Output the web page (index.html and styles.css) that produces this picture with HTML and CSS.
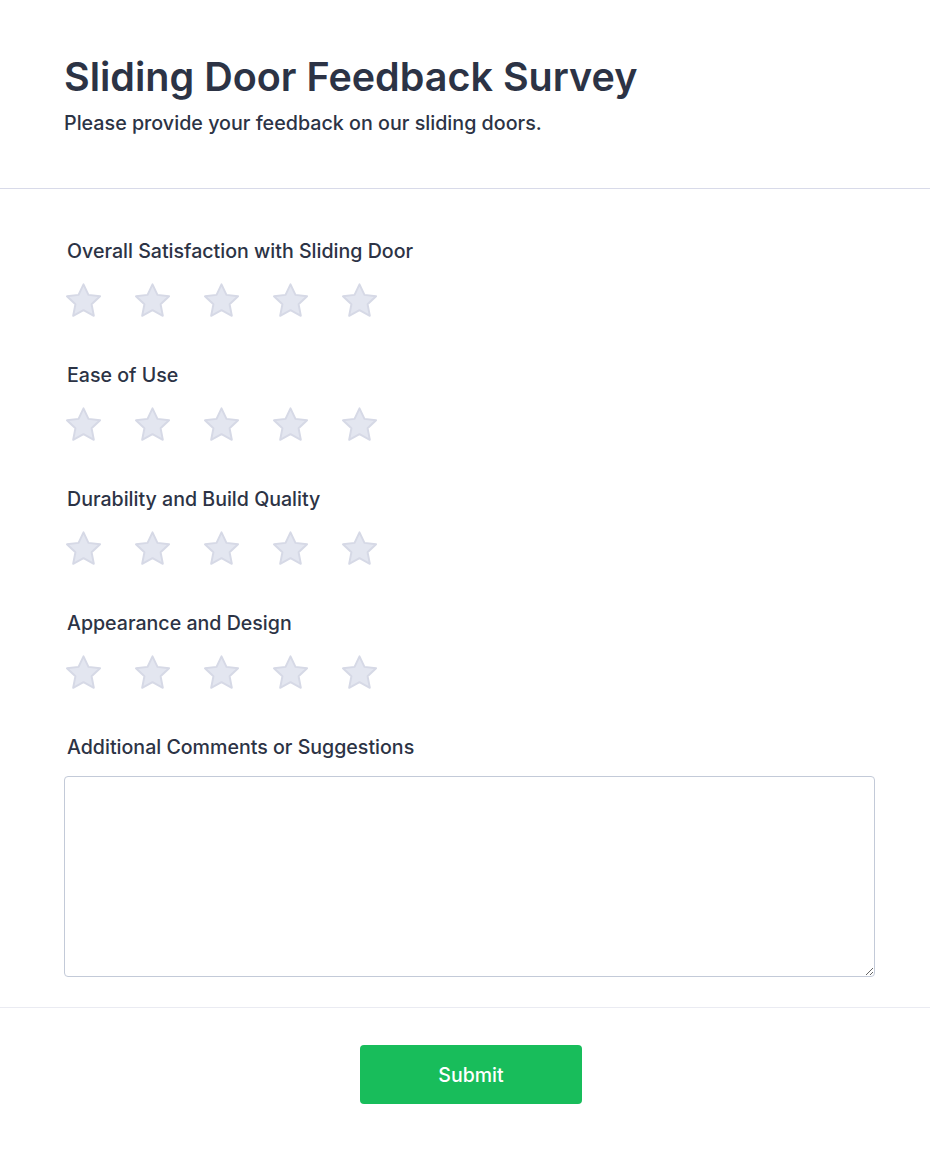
FILE: index.html
```html
<!DOCTYPE html>
<html lang="en">
<head>
<meta charset="utf-8">
<title>Sliding Door Feedback Survey</title>
<link rel="stylesheet" href="styles.css">
</head>
<body>
<svg width="0" height="0" class="defs" aria-hidden="true">
  <defs>
    <symbol id="star" viewBox="0 0 40 38">
      <path d="M20 2.4 L25.1 13.2 L37 14.7 L28.3 22.9 L30.6 34.7 L20 28.9 L9.4 34.7 L11.7 22.9 L3 14.7 L14.9 13.2 Z" fill="#e3e6f0" stroke="#d6d9e6" stroke-width="2" stroke-linejoin="round"/>
    </symbol>
  </defs>
</svg>
<div class="form">
  <header class="header">
    <h1 class="title">Sliding Door Feedback Survey</h1>
    <p class="subtitle">Please provide your feedback on our sliding doors.</p>
  </header>
  <main class="body">
    <div class="field">
      <label class="label">Overall Satisfaction with Sliding Door</label>
      <div class="stars">
        <svg class="star"><use href="#star"/></svg>
        <svg class="star"><use href="#star"/></svg>
        <svg class="star"><use href="#star"/></svg>
        <svg class="star"><use href="#star"/></svg>
        <svg class="star"><use href="#star"/></svg>
      </div>
    </div>
    <div class="field">
      <label class="label">Ease of Use</label>
      <div class="stars">
        <svg class="star"><use href="#star"/></svg>
        <svg class="star"><use href="#star"/></svg>
        <svg class="star"><use href="#star"/></svg>
        <svg class="star"><use href="#star"/></svg>
        <svg class="star"><use href="#star"/></svg>
      </div>
    </div>
    <div class="field">
      <label class="label">Durability and Build Quality</label>
      <div class="stars">
        <svg class="star"><use href="#star"/></svg>
        <svg class="star"><use href="#star"/></svg>
        <svg class="star"><use href="#star"/></svg>
        <svg class="star"><use href="#star"/></svg>
        <svg class="star"><use href="#star"/></svg>
      </div>
    </div>
    <div class="field">
      <label class="label">Appearance and Design</label>
      <div class="stars">
        <svg class="star"><use href="#star"/></svg>
        <svg class="star"><use href="#star"/></svg>
        <svg class="star"><use href="#star"/></svg>
        <svg class="star"><use href="#star"/></svg>
        <svg class="star"><use href="#star"/></svg>
      </div>
    </div>
    <div class="field field-text">
      <label class="label">Additional Comments or Suggestions</label>
      <textarea class="textarea"></textarea>
    </div>
  </main>
  <footer class="footer">
    <button class="submit" type="button">Submit</button>
  </footer>
</div>
</body>
</html>
```

FILE: styles.css
```css
* { box-sizing: border-box; }
html, body { margin: 0; padding: 0; background: #ffffff; }
body { font-family: Inter, "Noto Sans", sans-serif; color: #2c3345; }
.defs { position: absolute; width: 0; height: 0; overflow: hidden; }
.form { width: 930px; }
.header {
  padding: 53px 64px 0;
  height: 189px;
  border-bottom: 1px solid #d8dae9;
}
.title {
  margin: 0;
  font-size: 39.5px;
  line-height: 48px;
  font-weight: 600;
  color: #2c3345;
}
.subtitle {
  margin: 9px 0 0;
  font-size: 19.7px;
  line-height: 26px;
  font-weight: 500;
  color: #2c3345;
}
.body {
  padding: 50px 55px 30px 64px;
  border-bottom: 1px solid #eaebf2;
}
.field { margin-bottom: 44px; }
.field-text { margin-bottom: 0; }
.label {
  display: block;
  padding-left: 3px;
  font-size: 19.6px;
  line-height: 24px;
  font-weight: 500;
  color: #2c3345;
}
.stars {
  display: flex;
  gap: 30px;
  margin-top: 19px;
}
.star { width: 39px; height: 37px; display: block; }
.textarea {
  display: block;
  margin-top: 17px;
  width: 811px;
  height: 201px;
  border: 1px solid #c3cad8;
  border-radius: 4px;
  resize: vertical;
  font-family: inherit;
}
.footer {
  display: flex;
  justify-content: center;
  padding: 37px 0 50px 12px;
}
.submit {
  width: 222px;
  height: 59px;
  background: #18bd5b;
  color: #ffffff;
  border: none;
  border-radius: 4px;
  font-family: inherit;
  font-size: 19.5px;
  font-weight: 500;
}
```
